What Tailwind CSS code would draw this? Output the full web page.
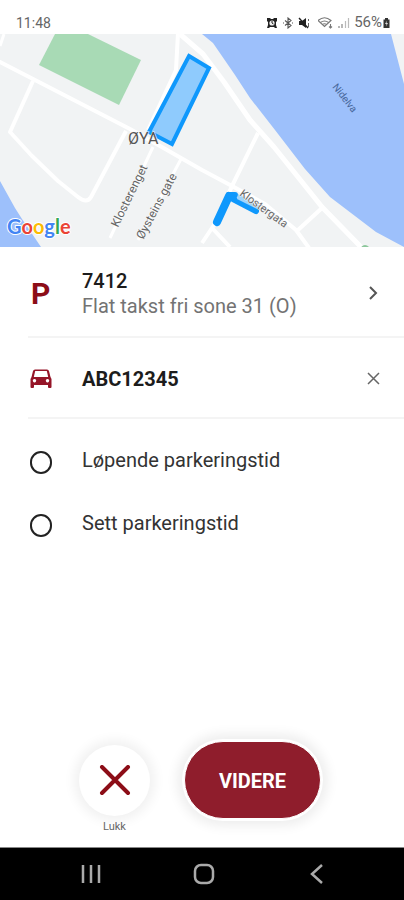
<!DOCTYPE html>
<html lang="no">
<head>
<meta charset="utf-8">
<meta name="viewport" content="width=device-width, initial-scale=1">
<title>Parkering</title>
<script src="https://cdn.jsdelivr.net/npm/@tailwindcss/browser@4"></script>
</head>
<body class="flex min-h-screen flex-col bg-white font-[Roboto,'Liberation_Sans',sans-serif] text-[#1c1c1c]">
  <header class="flex h-[34px] items-center justify-between pt-3 pr-[13px] pl-4 text-sm text-[#666]">
    <time>11:48</time>
    <div class="flex items-center gap-1">
      <svg class="h-3 w-3" viewBox="0 0 12 12" aria-label="Alarm"><path d="M1 1h3l1 1h2l1-1h3v3l-1 1v3l1 3H9l-1-1H4l-1 1H1l1-3V5L1 4z" fill="#222"/><circle cx="6" cy="6" r="2.6" fill="#eee"/><path d="M6 4v2l1.5 1" fill="none" stroke="#222"/></svg>
      <svg class="h-3 w-3" viewBox="0 0 12 12" fill="none" stroke="#555" stroke-width="1.1" aria-label="Bluetooth"><path d="M3 3.5 9 8.5 6 11V1l3 2.5-6 5M1 6h1m8 0h1"/></svg>
      <svg class="h-3 w-3" viewBox="0 0 12 12" aria-label="Lyd av"><path d="M1 4h3l4-3v10L4 8H1z" fill="#222"/><path d="m1 1 9 10" stroke="#222" stroke-width="1.4"/><path d="M10.5 2v2m0 2v4" stroke="#666"/></svg>
      <svg class="ml-1 h-3 w-4" viewBox="0 0 16 12" fill="none" stroke="#777" stroke-width="1.1" aria-label="Wi-Fi"><path d="M0 3.500q6.500-5.500 13 0L6.500 9.500zM2.500 5.500q4-3 8 0M4.500 7.500q2-1.500 4 0M12.500 7v4m-1.500-1.500 1.500 1.500L14 9.500"/></svg>
      <svg class="h-3 w-3" viewBox="0 0 12 12" fill="none" stroke="#888" stroke-width="1.2" aria-label="Signal"><path d="M1 9v2M4 7v4"/><path d="M7.500 4v7M10.500 1v10" stroke="#bbb"/></svg>
      <span class="flex items-center text-[15px]">56%<svg class="h-3 w-[9px]" viewBox="0 0 8 12" aria-label="Batteri"><path d="M2.500 1h3v1.500H7V11H1V2.500h1.500z" fill="#333"/><path d="M4.500 3.500 2.500 7H4l-.5 2.500L5.500 6H4z" fill="#ddd"/></svg></span>
    </div>
  </header>

  <main class="flex grow flex-col">
    <svg class="block w-full" viewBox="0 34 404 213" role="img" aria-label="Kart over Øya">
      <rect y="34" width="404" height="213" fill="#f1f3f4"/>
      <g fill="#9dc0fb">
        <path d="M202 34 213 43 235 75 250 98 275 130 305 169 330 197 376 232 404 247V84L391 34z"/>
        <path d="M0 181 15 208 22 219 41 247H0z"/>
      </g>
      <path d="M55 34H88L141 60 119 105 39 65z" fill="#a8dab5"/>
      <path d="M361 247q4-4 8 0z" fill="#8cc79b"/>
      <g fill="none" stroke="#fff" stroke-width="4" stroke-linejoin="round">
        <path d="M-2 61 35 80 130 129 160 146 202 170 232 186 265 204 296 230 309 248"/>
        <path d="M33 81 10 132 32 156 58 181 78 197Q87 204 91 197L126 131"/>
        <path d="M178 33 176 70 148 130"/>
        <path d="M180 34 203 54 224 82 250 120 274 147 322 207 361 247" stroke-width="5"/>
        <path d="M258 133 233 184 214 225 202 243M213 229 230 247M322 208 298 230"/>
        <path d="M153 147 110 238M181 159 138 240M4 34 0 46" stroke-width="3"/>
      </g>
      <path d="M189 56 209 68 172 144 149 132z" fill="#8fcbfd" stroke="#0f98fc" stroke-width="4"/>
      <g fill="none" stroke="#0f98fc" stroke-linecap="round" stroke-linejoin="round">
        <path d="M217 222 229 196" stroke-width="8"/>
        <path d="M229 195H235" stroke-width="6"/>
        <path d="M233 199 256 211" stroke-width="6"/>
      </g>
      <path d="M238 194 260 206 257 209 237 199z" fill="#9fd3fb"/>
      <g fill="#666" stroke="#f8f9fa" stroke-width="1" paint-order="stroke" font-size="12">
        <text x="128" y="144" font-size="16" fill="#555">ØYA</text>
        <text transform="translate(118 228) rotate(-64)">Klosterenget</text>
        <text transform="translate(143 240) rotate(-62)">Øysteins gate</text>
        <text transform="translate(239 195) rotate(36)" font-size="11">Klostergata</text>
      </g>
      <text transform="translate(332 87) rotate(52)" fill="#47669a" font-size="10">Nidelva</text>
      <text x="7" y="234" font-family="Lato, sans-serif" font-size="20" font-weight="700" stroke="#fff" stroke-width="2" stroke-linejoin="round" paint-order="stroke"><tspan fill="#4285f4">G</tspan><tspan fill="#ea4335">o</tspan><tspan fill="#fbbc04">o</tspan><tspan fill="#4285f4">g</tspan><tspan fill="#34a853">l</tspan><tspan fill="#ea4335">e</tspan></text>
    </svg>

    <section class="ml-7" aria-label="Parkering">
      <button type="button" class="flex h-[91px] w-full items-center border-b-2 border-[#f4f4f4] pt-1 pr-5 text-left">
        <span class="w-[54px] pl-[3px] text-3xl leading-8 font-bold text-[#8c0d17]">P</span>
        <span class="grow text-xl leading-[25px]"><span class="block font-medium">7412</span><span class="block text-[#737373]">Flat takst fri sone 31 (O)</span></span>
        <svg class="h-5 w-5" viewBox="0 0 20 20" fill="none" stroke="#555" stroke-width="2" aria-hidden="true"><path d="m6 3 6 6-6 6"/></svg>
      </button>
      <div class="flex h-[81px] items-center border-b-2 border-[#f4f4f4] pt-0.5 pr-5">
        <span class="w-[54px] pl-[2px]">
          <svg class="h-[22px] w-[22px]" viewBox="0 0 22 22" aria-label="Bil"><path fill-rule="evenodd" d="M5 1.500h12q1.500 0 2 1.500L20.500 9 21.500 11V19q0 1-1 1H19q-1 0-1-1v-2H4v2q0 1-1 1H1.500q-1 0-1-1V11L1.500 9 3 3Q3.500 1.500 5 1.500zM5.200 3 3.800 9H18.200L16.800 3zM4.500 11a1.700 1.700 0 1 0 .01 0zM17.500 11a1.700 1.700 0 1 0 .01 0z" fill="#951528"/></svg>
        </span>
        <span class="grow text-xl font-bold">ABC12345</span>
        <button type="button" aria-label="Fjern kjøretøy"><svg class="h-5 w-5" viewBox="0 0 20 20" fill="none" stroke="#666" stroke-width="1.500" aria-hidden="true"><path d="m4 4 11 11M15 4 4 15"/></svg></button>
      </div>
    </section>

    <div role="radiogroup" aria-label="Parkeringstid" class="flex flex-col pt-2.5 pl-[30px]">
      <label class="flex h-[63px] items-center gap-[30px] text-xl text-[#333]"><input type="radio" name="tid" class="mt-1 h-[23px] w-[22px] appearance-none rounded-full border-2 border-[#222] checked:bg-[#8f1d2c]"><span class="-mt-0.5">Løpende parkeringstid</span></label>
      <label class="flex h-[63px] items-center gap-[30px] text-xl text-[#333]"><input type="radio" name="tid" class="mt-1 h-[23px] w-[22px] appearance-none rounded-full border-2 border-[#222] checked:bg-[#8f1d2c]"><span class="-mt-0.5">Sett parkeringstid</span></label>
    </div>

    <div class="mt-auto flex items-start justify-center gap-[34px] pr-1 pb-3">
      <div class="flex flex-col items-center pt-1">
        <button type="button" aria-labelledby="lukk" class="flex h-[71px] w-[71px] items-center justify-center rounded-full bg-white shadow-[0_0_12px_5px_rgba(0,0,0,0.06)]"><svg class="h-8 w-8" viewBox="0 0 32 32" fill="none" stroke="#8c0d17" stroke-width="4" stroke-linecap="round" aria-hidden="true"><path d="m3 2 26 26M29 2 3 28"/></svg></button>
        <span id="lukk" class="mt-[3px] text-[11px] leading-4 text-[#666]">Lukk</span>
      </div>
      <button type="button" class="h-[78px] w-[137px] rounded-full border border-white bg-[#8f1d2c] pt-0.5 text-xl font-bold text-white shadow-[0_0_0_2px_white,0_0_12px_7px_rgba(0,0,0,0.07)]">VIDERE</button>
    </div>
  </main>

  <nav class="flex h-[53px] items-center justify-between border-t border-[#888] bg-black pr-[75px] pl-[79px]" aria-label="Systemnavigasjon">
    <button type="button" aria-label="Siste apper"><svg class="h-6 w-6" viewBox="0 0 24 24" stroke="#aaa" stroke-width="2.500"><path d="M4 3v18M12 3v18M20 3v18"/></svg></button>
    <button type="button" aria-label="Hjem"><svg class="h-6 w-6" viewBox="0 0 24 24" fill="none" stroke="#aaa" stroke-width="2.500"><rect x="3" y="3" width="18" height="18" rx="6"/></svg></button>
    <button type="button" aria-label="Tilbake"><svg class="h-6 w-6" viewBox="0 0 24 24" fill="none" stroke="#aaa" stroke-width="2.500"><path d="m17 3-10 9 10 9"/></svg></button>
  </nav>
</body>
</html>
